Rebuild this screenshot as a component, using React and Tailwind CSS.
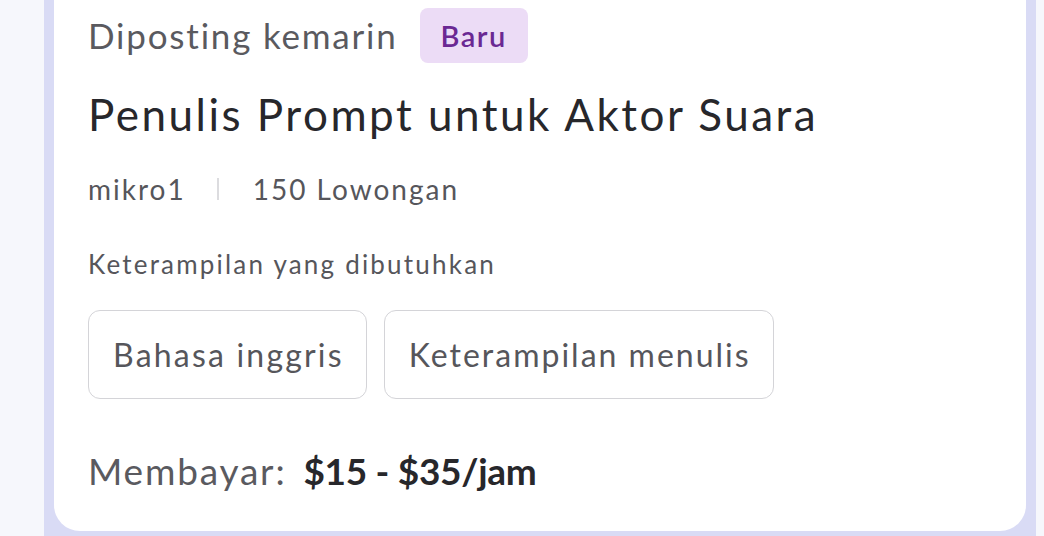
export default function App() {
  return (
    <div className="h-[536px] w-[1044px] bg-[#f6f7fc] pl-[44px] pr-[8px] overflow-hidden" style={{ fontFamily: "Lato, 'Noto Sans', sans-serif" }}>
      <div className="h-full bg-[#d9dbf5] px-[10px] pb-[5px]">
        <div className="h-full bg-white rounded-b-[26px] pl-[34px] flex flex-col">
          <div className="flex items-center pt-[8px] gap-[22px]">
            <span className="text-[35px] leading-[55px] tracking-[1.8px] text-[#5a5a5f]">Diposting kemarin</span>
            <span className="h-[55px] w-[108px] rounded-[8px] bg-[#ecdcf6] flex items-center justify-center text-[29px] tracking-[1.5px] font-semibold text-[#6a2893]">Baru</span>
          </div>
          <h1 className="mt-[25px] text-[44px] leading-[52px] tracking-[2.5px] text-[#27272b]">Penulis Prompt untuk Aktor Suara</h1>
          <div className="mt-[33px] flex items-center text-[28px] leading-[32px] tracking-[2px] text-[#56565b]">
            <span>mikro1</span>
            <span className="ml-[31px] mr-[34px] h-[22px] w-[2px] bg-[#dcdcdf]"></span>
            <span>150 Lowongan</span>
          </div>
          <div className="mt-[44px] text-[26px] leading-[30px] tracking-[2.2px] text-[#56565b]">Keterampilan yang dibutuhkan</div>
          <div className="mt-[31px] flex gap-[17px]">
            <span className="h-[89px] pl-[24px] pr-[22px] flex items-center rounded-[12px] border-[1.5px] border-[#d4d4d8] text-[32px] tracking-[2.2px] text-[#56565b]">Bahasa inggris</span>
            <span className="h-[89px] pl-[24px] pr-[22px] flex items-center rounded-[12px] border-[1.5px] border-[#d4d4d8] text-[32px] tracking-[2px] text-[#56565b]">Keterampilan menulis</span>
          </div>
          <div className="mt-[50px] flex items-baseline text-[37px] leading-[44px]">
            <span className="tracking-[1.8px] text-[#5a5a5f]">Membayar:</span>
            <span className="ml-[17px] font-bold tracking-[-0.3px] text-[#27272b]">$15 - $35/jam</span>
          </div>
        </div>
      </div>
    </div>
  );
}
